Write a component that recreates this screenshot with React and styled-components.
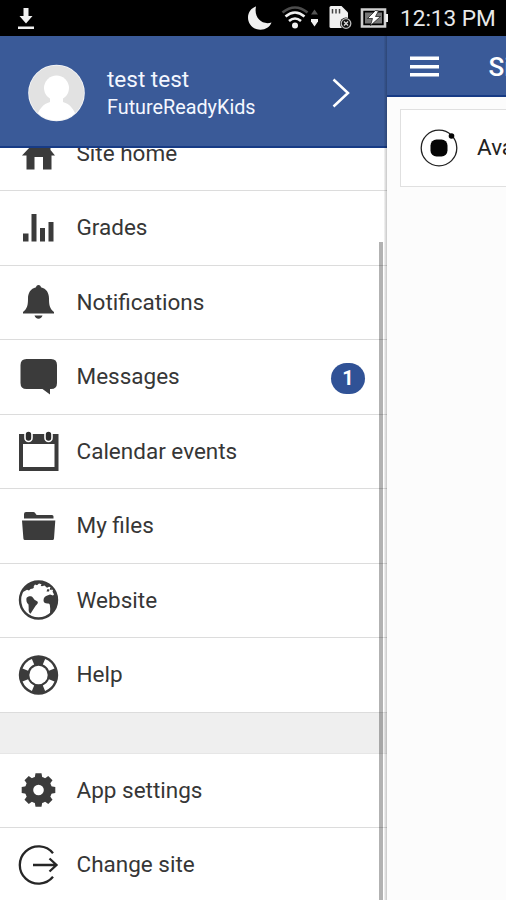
import React from "react"
import styled, { createGlobalStyle } from "styled-components"

const colors = {
  primary: "#3a5a98",
  primaryDark: "#173b85",
  icon: "#3b3b3b",
  line: "#dcdcdc",
}

const GlobalStyle = createGlobalStyle`
  * {
    box-sizing: border-box;
  }
  body {
    margin: 0;
    overflow: hidden;
    font-family: Roboto, "Liberation Sans", sans-serif;
  }
  svg {
    display: block;
    flex-shrink: 0;
  }
`

const Screen = styled.div`
  width: 506px;
  height: 900px;
  display: flex;
  flex-direction: column;
  overflow: hidden;
  background: #fcfcfc;
`

const StatusBar = styled.div`
  height: 36px;
  flex-shrink: 0;
  display: flex;
  align-items: center;
  padding: 0 11px 0 17px;
  background: #000;
  color: #e8e8e8;
`

const StatusIcons = styled.div`
  display: flex;
  align-items: center;
  margin-left: auto;
`

const Clock = styled.span`
  width: 95px;
  margin-left: 12px;
  padding-top: 1px;
  font-size: 22.6px;
  line-height: 36px;
  white-space: nowrap;
`

const Body = styled.div`
  flex: 1;
  min-height: 0;
  display: flex;
`

const Drawer = styled.aside`
  position: relative;
  width: 387px;
  flex-shrink: 0;
  display: flex;
  flex-direction: column;
  background: #fff;
`

const DrawerEdge = styled.div`
  position: absolute;
  top: 0;
  bottom: 0;
  right: 0;
  width: 3px;
  background: linear-gradient(90deg, rgba(0, 0, 0, 0.04), rgba(0, 0, 0, 0.22));
`

const ScrollThumb = styled.div`
  position: absolute;
  top: 206px;
  bottom: 0;
  right: 4px;
  width: 4px;
  background: rgba(0, 0, 0, 0.3);
`

const Profile = styled.div`
  height: 112px;
  flex-shrink: 0;
  display: flex;
  align-items: center;
  padding: 4px 36px 0 28px;
  background: ${colors.primary};
  border-bottom: 2px solid ${colors.primaryDark};
  color: #f4f7ff;
`

const ProfileText = styled.div`
  flex: 1;
  margin-left: 22px;
`

const UserName = styled.div`
  font-size: 22.5px;
  line-height: 30px;
`

const SiteName = styled.div`
  font-size: 19.8px;
  line-height: 28px;
`

const Menu = styled.nav`
  flex: 1;
  min-height: 0;
  overflow: hidden;
`

const MenuList = styled.div`
  margin-top: -31.5px;
`

const MenuItem = styled.div`
  height: 74.5px;
  display: flex;
  align-items: center;
  padding: 0 22px 0 17px;
  border-bottom: 1.5px solid ${colors.line};
  color: #363636;
`

const MenuLabel = styled.span`
  flex: 1;
  margin: -1px 0 0 17.5px;
  font-size: 22.5px;
  line-height: 30px;
  white-space: nowrap;
`

const Badge = styled.span`
  width: 34px;
  height: 31px;
  margin-top: 3px;
  border-radius: 16px;
  background: #305296;
  color: #fff;
  font-size: 20px;
  font-weight: 700;
  line-height: 31px;
  text-align: center;
`

const Gap = styled.div`
  height: 41px;
  background: #efefef;
  border-bottom: 1px solid #e6e6e6;
`

const Main = styled.main`
  flex: 1;
  min-width: 0;
  overflow: hidden;
`

const MainHeader = styled.header`
  height: 61px;
  display: flex;
  align-items: center;
  padding: 2px 0 0 22.5px;
  background: ${colors.primary};
  border-bottom: 2px solid ${colors.primaryDark};
  color: #fff;
`

const MainTitle = styled.h1`
  margin: 0 0 0 50px;
  font-size: 26px;
  font-weight: 500;
  line-height: 40px;
  white-space: nowrap;
`

const Card = styled.div`
  width: 300px;
  height: 78px;
  margin: 12px 0 0 13px;
  display: flex;
  align-items: center;
  padding-left: 18px;
  border: 1.5px solid #e0e0e0;
  background: #fff;
`

const CardLabel = styled.span`
  margin: -3px 0 0 18px;
  font-size: 22.5px;
  line-height: 30px;
  color: #222;
  white-space: nowrap;
`

const MenuIcon = ({ children }) => (
  <svg width="42" height="42" viewBox="-0.5 0 42 42" fill={colors.icon}>
    {children}
  </svg>
)

const HomeIcon = () => (
  <MenuIcon>
    <path d="M21 6 4.5 23.5H9V37.5H17V25H25.5V37.5H34V23.5H37.5L33 18V9H29V14Z" />
  </MenuIcon>
)

const GradesIcon = () => (
  <MenuIcon>
    <path d="M5.5 26.5H11V34.5H5.5zM14 7H19V34.5H14zM22.5 21H27.5V34.5H22.5zM31 15H36V34.5H31z" />
  </MenuIcon>
)

const BellIcon = () => (
  <MenuIcon>
    <path d="M21 4c1.600 0 2.200 1 2.400 2.200C29 7.500 31.500 12 31.500 17.500c0 7 .8 10 5 13.500v1.500h-31V31c4.200-3.500 5-6.500 5-13.500C10.500 12 13 7.500 18.600 6.200 18.800 5 19.400 4 21 4zM17 34.500h8c-.5 2-2 3.200-4 3.200s-3.500-1.200-4-3.200z" />
  </MenuIcon>
)

const MessageIcon = () => (
  <MenuIcon>
    <path d="M9 3H33.500Q39.500 3 39.500 9V27Q39.500 33 33.500 33H32.500V38.500L25 33H9Q3 33 3 27V9Q3 3 9 3Z" />
  </MenuIcon>
)

const CalendarIcon = () => (
  <MenuIcon>
    <path fillRule="evenodd" d="M1.500 4H41V41H1.500zM5.500 14V37H37V14z" />
    <g fill="#2c2c2c" stroke="#fff" strokeWidth="1.600">
      <rect x="7.500" y="1" width="7" height="10.500" rx="3.500" />
      <rect x="27.500" y="1" width="7" height="10.500" rx="3.500" />
    </g>
  </MenuIcon>
)

const FolderIcon = () => (
  <MenuIcon>
    <path d="M6.500 13.500V9Q6.500 7 8.500 7H16Q17.500 7 18 8.500T20 10H34.500Q36 10 36 11.500V13.500z" />
    <path d="M4.500 15.500H37.800L36.500 33.500Q36.400 35 35 35H7.500Q6 35 5.900 33.500z" />
  </MenuIcon>
)

const EarthIcon = () => (
  <MenuIcon>
    <circle cx="21" cy="21" r="18.500" fill="#fff" stroke={colors.icon} strokeWidth="2.400" />
    <path d="M5.500 13C9 5.500 15 2 21 2c5.500 0 10.500 2.500 14 6.500l-3-1-2.500 1.200L27 6.500l-2.500.8L21 6l-4 1.500-1.500 2-2.500.5-1.500 1.500-2-.8z" />
    <path d="M16 7.500l1.500-2 2 .8 2-1.800 2.500.7-1 2-2.500.3-2 1.500z" fill="#fff" />
    <path d="M9 19c1.500-2 5-2.300 6.500-.3l1.500 2 3 1.800c1 1-.2 2.800-1.700 4L16 30l-3 4.700c-1.800-1-2-3-1.800-5.700L11 25.500C9.200 24 8.500 21.500 9 19z" />
    <path d="M30.500 16.200l2-.8 3 1 1-.8-1.500-3 1.500-2C39 13.500 40 17 40 21c0 6-2.500 11-7 14.500-1.200-2 .3-4.500-.5-8 0-2.200-.5-2.800-1.700-3-3 .3-4.800-1-4.800-3.300 0-2.500 1.700-4.500 4.500-5z" />
    <path d="M29 12.500l1-2.500 2 .5-.5 2zM32.500 8.500l2 1-.5 1.800-1.500-.8z" />
  </MenuIcon>
)

const HelpIcon = () => (
  <MenuIcon>
    <circle cx="21" cy="21" r="19.700" />
    <circle
      cx="21"
      cy="21"
      r="14.300"
      fill="none"
      stroke="#fff"
      strokeWidth="6"
      pathLength="80"
      strokeDasharray="10 10"
      strokeDashoffset="-5"
    />
    <circle cx="21" cy="21" r="9.200" fill="#fff" />
  </MenuIcon>
)

const teeth = [0, 45, 90, 135, 180, 225, 270, 315]

const GearIcon = () => (
  <MenuIcon>
    <circle cx="21" cy="21" r="13.500" />
    {teeth.map(angle => (
      <path
        key={angle}
        d="M18 4.200H24L25 10H17z"
        transform={`rotate(${angle} 21 21)`}
      />
    ))}
    <circle cx="21" cy="21" r="5.300" fill="#fff" />
  </MenuIcon>
)

const ChangeSiteIcon = () => (
  <MenuIcon>
    <path
      d="M35.500 9.200A18.700 18.700 0 1 0 35.500 32.800M15.500 21H38.500M32 14.500 39 21 32 27.500"
      fill="none"
      stroke="#262626"
      strokeWidth="2.300"
    />
  </MenuIcon>
)

const Avatar = () => (
  <svg width="57" height="58" viewBox="0 0 57 58">
    <clipPath id="avatar">
      <circle cx="28.500" cy="29" r="27.500" />
    </clipPath>
    <circle cx="28.500" cy="29" r="28.300" fill="#f7f8fa" />
    <g clipPath="url(#avatar)">
      <path d="M0 0H57V58H0z" fill="#e2e2e2" />
      <circle cx="28.500" cy="24" r="12.500" fill="#fff" />
      <path d="M22 33H35V38C42 40 46 45 49 54V60H8V54C11 45 15 40 22 38z" fill="#fff" />
    </g>
  </svg>
)

const DownloadIcon = () => (
  <svg width="18" height="24" viewBox="0 0 18 24" fill="#f0f0f0">
    <path d="M6.500 2H11.500V10H15.500L9 17.500 2.500 10H6.500zM1 20.500H17V23H1z" />
  </svg>
)

// moon, wifi, data arrows, sd card and battery share one strip
const SystemIcons = () => (
  <svg width="142" height="36" viewBox="246 0 142 36" fill="#f0f0f0">
    <path d="M256 6.500C251 8 248 12.500 248 17.500 248 24.500 253.500 29.700 260.500 29.700 265.500 29.700 270 26.800 271.500 22.500 262.500 25.500 253.500 18 256 6.500Z" />
    <g fill="none" stroke="#f0f0f0" strokeWidth="2.600">
      <path d="M282.500 12.500Q295 2.500 307.500 12.500" stroke="#4c4c4c" />
      <path d="M285.500 16.500Q295 8.500 304.500 16.500" />
      <path d="M289 21Q295 16 301 21" />
    </g>
    <circle cx="295" cy="25.500" r="3" />
    <path d="M311 14.500 314.500 9.500 318 14.500z" fill="#555" />
    <path d="M311 19H318V21.500L314.500 26.500 311 21.500z" />
    <path d="M329.500 7.500Q329.500 6 331 6H341.500L348 12.500V28H331Q329.500 28 329.500 26.500z" />
    <path d="M332.500 9V13.500M336 9V13.500M339.500 9V13.500" stroke="#444" strokeWidth="1.500" />
    <circle cx="346" cy="23.500" r="6" fill="#000" />
    <circle cx="346" cy="23.500" r="4.800" fill="#111" stroke="#bbb" strokeWidth="1.300" />
    <path d="M344 21.500l4 4m0-4l-4 4" stroke="#ddd" strokeWidth="1.300" />
    <path d="M362 9.500H385V26.500H362z" fill="#000" stroke="#d0d0d0" strokeWidth="2.600" />
    <path d="M385.500 14H388V22H385.500z" />
    <path d="M365 12.500H382V23.500H365z" fill="#777" />
    <path d="M375.500 10.500 367.500 18.500H372.500L370.500 25.500 380.500 16.500H375.500L378.500 11z" fill="#fff" stroke="#111" strokeWidth=".7" />
  </svg>
)

const ChevronIcon = () => (
  <svg width="20" height="32" viewBox="0 0 20 32">
    <path d="M2.500 2.500 17 16 2.500 29.500" fill="none" stroke="#fff" strokeWidth="2.500" />
  </svg>
)

const BurgerIcon = () => (
  <svg width="29" height="24" viewBox="0 0 29 24" fill="#fff">
    <path d="M0 1.500H29V5H0zM0 10H29V13.500H0zM0 18H29V21.500H0z" />
  </svg>
)

const OrbitIcon = () => (
  <svg width="40" height="40" viewBox="0 0 40 40" fill="#050505">
    <circle cx="20" cy="20" r="17.800" fill="none" stroke="#222" strokeWidth="1.300" />
    <rect x="11.500" y="11.500" width="17" height="17" rx="6" />
    <circle cx="32.500" cy="8" r="2.800" />
  </svg>
)

const siteItems = [
  { label: "Site home", Icon: HomeIcon },
  { label: "Grades", Icon: GradesIcon },
  { label: "Notifications", Icon: BellIcon },
  { label: "Messages", Icon: MessageIcon, count: 1 },
  { label: "Calendar events", Icon: CalendarIcon },
  { label: "My files", Icon: FolderIcon },
  { label: "Website", Icon: EarthIcon },
  { label: "Help", Icon: HelpIcon },
]

const appItems = [
  { label: "App settings", Icon: GearIcon },
  { label: "Change site", Icon: ChangeSiteIcon },
]

const renderItem = ({ label, Icon, count }) => (
  <MenuItem key={label}>
    <Icon />
    <MenuLabel>{label}</MenuLabel>
    {count && <Badge>{count}</Badge>}
  </MenuItem>
)

const App = () => {
  return (
    <>
      <GlobalStyle />
      <Screen>
        <StatusBar>
          <DownloadIcon />
          <StatusIcons>
            <SystemIcons />
            <Clock>12:13 PM</Clock>
          </StatusIcons>
        </StatusBar>
        <Body>
          <Drawer>
            <Profile>
              <Avatar />
              <ProfileText>
                <UserName>test test</UserName>
                <SiteName>FutureReadyKids</SiteName>
              </ProfileText>
              <ChevronIcon />
            </Profile>
            <Menu>
              <MenuList>
                {siteItems.map(renderItem)}
                <Gap />
                {appItems.map(renderItem)}
              </MenuList>
            </Menu>
            <ScrollThumb />
            <DrawerEdge />
          </Drawer>
          <Main>
            <MainHeader>
              <BurgerIcon />
              <MainTitle>Site home</MainTitle>
            </MainHeader>
            <Card>
              <OrbitIcon />
              <CardLabel>Available courses</CardLabel>
            </Card>
          </Main>
        </Body>
      </Screen>
    </>
  )
}

export default App
